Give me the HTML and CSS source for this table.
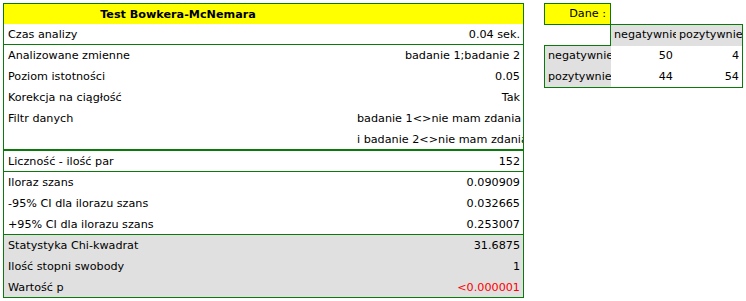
FILE: index.html
```html
<!DOCTYPE html>
<html lang="pl">
<head>
  <meta charset="UTF-8" />
  <meta name="viewport" content="width=device-width, initial-scale=1.0" />
  <title>Test Bowkera-McNemara</title>
  <link rel="stylesheet" href="styles.css">
</head>
<body>
  <div class="report">
    <div class="title"><span>Test Bowkera-McNemara</span></div>

    <div class="group">
      <div class="row"><span class="label">Czas analizy</span><span class="value">0.04 sek.</span></div>
    </div>

    <div class="group thick">
      <div class="row"><span class="label">Analizowane zmienne</span><span class="value">badanie 1;badanie 2</span></div>
      <div class="row"><span class="label">Poziom istotności</span><span class="value">0.05</span></div>
      <div class="row"><span class="label">Korekcja na ciągłość</span><span class="value">Tak</span></div>
      <div class="row"><span class="label">Filtr danych</span><span class="value">badanie 1&lt;&gt;nie mam zdania</span></div>
      <div class="row"><span class="label"></span><span class="value">i badanie 2&lt;&gt;nie mam zdania</span></div>
    </div>

    <div class="group">
      <div class="row"><span class="label">Liczność - ilość par</span><span class="value">152</span></div>
    </div>

    <div class="group">
      <div class="row"><span class="label">Iloraz szans</span><span class="value">0.090909</span></div>
      <div class="row"><span class="label">-95% CI dla ilorazu szans</span><span class="value">0.032665</span></div>
      <div class="row"><span class="label">+95% CI dla ilorazu szans</span><span class="value">0.253007</span></div>
    </div>

    <div class="group grey last">
      <div class="row"><span class="label">Statystyka Chi-kwadrat</span><span class="value">31.6875</span></div>
      <div class="row"><span class="label">Ilość stopni swobody</span><span class="value">1</span></div>
      <div class="row"><span class="label">Wartość p</span><span class="value red">&lt;0.000001</span></div>
    </div>
  </div>

  <div class="side">
    <div class="dane">Dane :</div>
    <div class="crosstab">
      <div class="corner"></div>
      <div class="head">negatywnie</div>
      <div class="head end">pozytywnie</div>

      <div class="rowhead">negatywnie</div>
      <div class="num">50</div>
      <div class="num end">4</div>

      <div class="rowhead bottom">pozytywnie</div>
      <div class="num bottom">44</div>
      <div class="num end bottom">54</div>
    </div>
  </div>
</body>
</html>
```

FILE: styles.css
```css
* {
  box-sizing: border-box;
}
body {
  margin: 0;
  padding: 3px;
  display: flex;
  align-items: flex-start;
  gap: 20px;
  background: white;
  font-family: "DejaVu Sans", Verdana, sans-serif;
  font-size: 11.2px;
  color: #000;
}

/* results table */
.report {
  width: 521px;
  border: 1px solid #0a7a0a;
}
.title {
  height: 20px;
  background: #ffff00;
  display: flex;
  align-items: center;
}
.title span {
  width: 348px;
  text-align: center;
  font-weight: bold;
}
.group {
  border-bottom: 1px solid #0a7a0a;
}
.group.thick {
  border-bottom-width: 2px;
}
.group.last {
  border-bottom: none;
}
.group.grey {
  background: #e0e0e0;
}
.row {
  height: 21px;
  display: flex;
  align-items: center;
}
.row:last-child {
  height: 20px;
}
.label {
  width: 349px;
  padding-left: 4px;
  white-space: nowrap;
}
.value {
  flex: 1;
  padding: 0 3px 0 4px;
  text-align: right;
  white-space: nowrap;
  overflow: hidden;
}
.red {
  color: #ff0000;
}

/* input data */
.dane {
  width: 67px;
  height: 22px;
  padding-right: 4px;
  background: #ffff00;
  border: 1px solid #0a7a0a;
  text-align: right;
  line-height: 20px;
}
.crosstab {
  margin-top: -1px;
  display: grid;
  grid-template-columns: 67px 65px 67px;
  grid-template-rows: 22px 21px 21px;
}
.crosstab div {
  white-space: nowrap;
  overflow: hidden;
  line-height: 20px;
}
.corner {
  border-right: 1px solid #0a7a0a;
  border-bottom: 1px solid #0a7a0a;
}
.head {
  background: #e0e0e0;
  border-top: 1px solid #0a7a0a;
  padding-left: 3px;
}
.rowhead {
  background: #e0e0e0;
  border-left: 1px solid #0a7a0a;
  padding-left: 3px;
}
.num {
  text-align: right;
  padding-right: 3px;
}
.end {
  border-right: 1px solid #0a7a0a;
}
.bottom {
  border-bottom: 1px solid #0a7a0a;
}
```
